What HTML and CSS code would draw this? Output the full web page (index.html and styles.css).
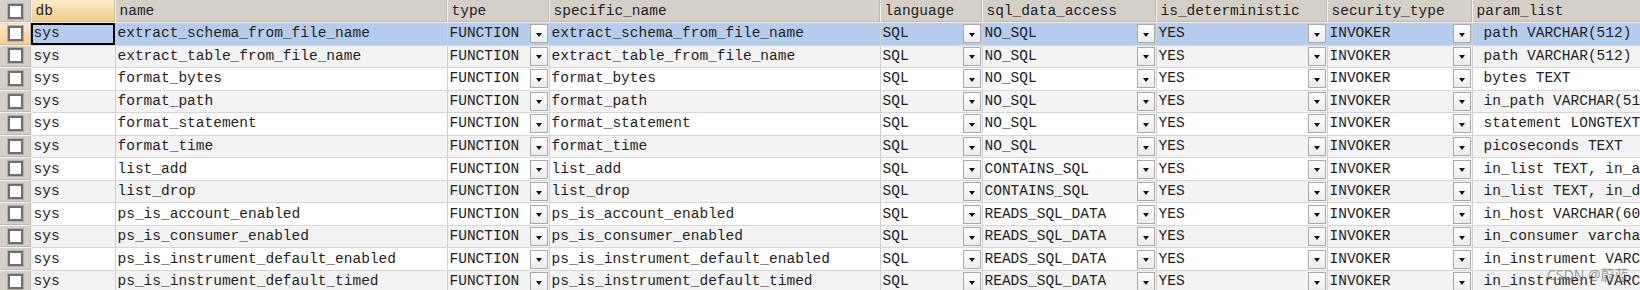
FILE: index.html
```html
<!DOCTYPE html>
<html lang="zh">
<head>
    <meta charset="UTF-8">
    <title>sys routines</title>
    <link rel="stylesheet" href="styles.css">
</head>
<body>
    <table class="grid">
        <colgroup>
            <col class="c-chk"><col class="c-db"><col class="c-name"><col class="c-type"><col class="c-spec">
            <col class="c-lang"><col class="c-access"><col class="c-det"><col class="c-sec"><col class="c-param">
        </colgroup>
        <thead>
            <tr>
                <th class="chk"><span class="box"></span></th>
                <th class="sorted">db</th>
                <th>name</th>
                <th>type</th>
                <th>specific_name</th>
                <th>language</th>
                <th>sql_data_access</th>
                <th>is_deterministic</th>
                <th>security_type</th>
                <th>param_list</th>
            </tr>
        </thead>
        <tbody>
            <tr class="selected">
                <td class="chk current"><span class="box"></span></td>
                <td class="focus">sys</td>
                <td>extract_schema_from_file_name</td>
                <td><div class="pick"><span>FUNCTION</span><i class="dd"></i></div></td>
                <td>extract_schema_from_file_name</td>
                <td><div class="pick"><span>SQL</span><i class="dd"></i></div></td>
                <td><div class="pick"><span>NO_SQL</span><i class="dd"></i></div></td>
                <td><div class="pick"><span>YES</span><i class="dd"></i></div></td>
                <td><div class="pick"><span>INVOKER</span><i class="dd"></i></div></td>
                <td class="param">path VARCHAR(512)</td>
            </tr>
            <tr>
                <td class="chk"><span class="box"></span></td>
                <td>sys</td>
                <td>extract_table_from_file_name</td>
                <td><div class="pick"><span>FUNCTION</span><i class="dd"></i></div></td>
                <td>extract_table_from_file_name</td>
                <td><div class="pick"><span>SQL</span><i class="dd"></i></div></td>
                <td><div class="pick"><span>NO_SQL</span><i class="dd"></i></div></td>
                <td><div class="pick"><span>YES</span><i class="dd"></i></div></td>
                <td><div class="pick"><span>INVOKER</span><i class="dd"></i></div></td>
                <td class="param">path VARCHAR(512)</td>
            </tr>
            <tr>
                <td class="chk"><span class="box"></span></td>
                <td>sys</td>
                <td>format_bytes</td>
                <td><div class="pick"><span>FUNCTION</span><i class="dd"></i></div></td>
                <td>format_bytes</td>
                <td><div class="pick"><span>SQL</span><i class="dd"></i></div></td>
                <td><div class="pick"><span>NO_SQL</span><i class="dd"></i></div></td>
                <td><div class="pick"><span>YES</span><i class="dd"></i></div></td>
                <td><div class="pick"><span>INVOKER</span><i class="dd"></i></div></td>
                <td class="param">bytes TEXT</td>
            </tr>
            <tr>
                <td class="chk"><span class="box"></span></td>
                <td>sys</td>
                <td>format_path</td>
                <td><div class="pick"><span>FUNCTION</span><i class="dd"></i></div></td>
                <td>format_path</td>
                <td><div class="pick"><span>SQL</span><i class="dd"></i></div></td>
                <td><div class="pick"><span>NO_SQL</span><i class="dd"></i></div></td>
                <td><div class="pick"><span>YES</span><i class="dd"></i></div></td>
                <td><div class="pick"><span>INVOKER</span><i class="dd"></i></div></td>
                <td class="param">in_path VARCHAR(512)</td>
            </tr>
            <tr>
                <td class="chk"><span class="box"></span></td>
                <td>sys</td>
                <td>format_statement</td>
                <td><div class="pick"><span>FUNCTION</span><i class="dd"></i></div></td>
                <td>format_statement</td>
                <td><div class="pick"><span>SQL</span><i class="dd"></i></div></td>
                <td><div class="pick"><span>NO_SQL</span><i class="dd"></i></div></td>
                <td><div class="pick"><span>YES</span><i class="dd"></i></div></td>
                <td><div class="pick"><span>INVOKER</span><i class="dd"></i></div></td>
                <td class="param">statement LONGTEXT</td>
            </tr>
            <tr>
                <td class="chk"><span class="box"></span></td>
                <td>sys</td>
                <td>format_time</td>
                <td><div class="pick"><span>FUNCTION</span><i class="dd"></i></div></td>
                <td>format_time</td>
                <td><div class="pick"><span>SQL</span><i class="dd"></i></div></td>
                <td><div class="pick"><span>NO_SQL</span><i class="dd"></i></div></td>
                <td><div class="pick"><span>YES</span><i class="dd"></i></div></td>
                <td><div class="pick"><span>INVOKER</span><i class="dd"></i></div></td>
                <td class="param">picoseconds TEXT</td>
            </tr>
            <tr>
                <td class="chk"><span class="box"></span></td>
                <td>sys</td>
                <td>list_add</td>
                <td><div class="pick"><span>FUNCTION</span><i class="dd"></i></div></td>
                <td>list_add</td>
                <td><div class="pick"><span>SQL</span><i class="dd"></i></div></td>
                <td><div class="pick"><span>CONTAINS_SQL</span><i class="dd"></i></div></td>
                <td><div class="pick"><span>YES</span><i class="dd"></i></div></td>
                <td><div class="pick"><span>INVOKER</span><i class="dd"></i></div></td>
                <td class="param">in_list TEXT, in_add_value TEXT</td>
            </tr>
            <tr>
                <td class="chk"><span class="box"></span></td>
                <td>sys</td>
                <td>list_drop</td>
                <td><div class="pick"><span>FUNCTION</span><i class="dd"></i></div></td>
                <td>list_drop</td>
                <td><div class="pick"><span>SQL</span><i class="dd"></i></div></td>
                <td><div class="pick"><span>CONTAINS_SQL</span><i class="dd"></i></div></td>
                <td><div class="pick"><span>YES</span><i class="dd"></i></div></td>
                <td><div class="pick"><span>INVOKER</span><i class="dd"></i></div></td>
                <td class="param">in_list TEXT, in_drop_value TEXT</td>
            </tr>
            <tr>
                <td class="chk"><span class="box"></span></td>
                <td>sys</td>
                <td>ps_is_account_enabled</td>
                <td><div class="pick"><span>FUNCTION</span><i class="dd"></i></div></td>
                <td>ps_is_account_enabled</td>
                <td><div class="pick"><span>SQL</span><i class="dd"></i></div></td>
                <td><div class="pick"><span>READS_SQL_DATA</span><i class="dd"></i></div></td>
                <td><div class="pick"><span>YES</span><i class="dd"></i></div></td>
                <td><div class="pick"><span>INVOKER</span><i class="dd"></i></div></td>
                <td class="param">in_host VARCHAR(60), in_user VARCHAR(32)</td>
            </tr>
            <tr>
                <td class="chk"><span class="box"></span></td>
                <td>sys</td>
                <td>ps_is_consumer_enabled</td>
                <td><div class="pick"><span>FUNCTION</span><i class="dd"></i></div></td>
                <td>ps_is_consumer_enabled</td>
                <td><div class="pick"><span>SQL</span><i class="dd"></i></div></td>
                <td><div class="pick"><span>READS_SQL_DATA</span><i class="dd"></i></div></td>
                <td><div class="pick"><span>YES</span><i class="dd"></i></div></td>
                <td><div class="pick"><span>INVOKER</span><i class="dd"></i></div></td>
                <td class="param">in_consumer varchar(64)</td>
            </tr>
            <tr>
                <td class="chk"><span class="box"></span></td>
                <td>sys</td>
                <td>ps_is_instrument_default_enabled</td>
                <td><div class="pick"><span>FUNCTION</span><i class="dd"></i></div></td>
                <td>ps_is_instrument_default_enabled</td>
                <td><div class="pick"><span>SQL</span><i class="dd"></i></div></td>
                <td><div class="pick"><span>READS_SQL_DATA</span><i class="dd"></i></div></td>
                <td><div class="pick"><span>YES</span><i class="dd"></i></div></td>
                <td><div class="pick"><span>INVOKER</span><i class="dd"></i></div></td>
                <td class="param">in_instrument VARCHAR(128)</td>
            </tr>
            <tr>
                <td class="chk"><span class="box"></span></td>
                <td>sys</td>
                <td>ps_is_instrument_default_timed</td>
                <td><div class="pick"><span>FUNCTION</span><i class="dd"></i></div></td>
                <td>ps_is_instrument_default_timed</td>
                <td><div class="pick"><span>SQL</span><i class="dd"></i></div></td>
                <td><div class="pick"><span>READS_SQL_DATA</span><i class="dd"></i></div></td>
                <td><div class="pick"><span>YES</span><i class="dd"></i></div></td>
                <td><div class="pick"><span>INVOKER</span><i class="dd"></i></div></td>
                <td class="param">in_instrument VARCHAR(128)</td>
            </tr>
        </tbody>
    </table>
    <div class="watermark">CSDN @蔚蓝</div>
</body>
</html>
```

FILE: styles.css
```css
html, body {
    margin: 0;
    padding: 0;
    overflow: hidden;
    background: #fff;
}
body {
    font-family: 'Liberation Mono', 'Courier New', monospace;
    font-size: 14.5px;
    color: #1e1e1e;
    width: 1640px;
    height: 290px;
    position: relative;
}
.grid {
    table-layout: fixed;
    border-collapse: collapse;
    width: 1800px;
}
.c-chk { width: 31px; }
.c-db { width: 84px; }
.c-name { width: 332px; }
.c-type { width: 102px; }
.c-spec { width: 331px; }
.c-lang { width: 102px; }
.c-access { width: 174px; }
.c-det { width: 171px; }
.c-sec { width: 145px; }
.c-param { width: 328px; }

.grid th {
    height: 22px;
    padding: 0 0 0 4px;
    text-align: left;
    font-weight: normal;
    background: #d4d0c8;
    border-right: 1px solid #f4f3ef;
    border-bottom: 1px solid #f4f3ef;
    box-shadow: inset -1px -1px 0 #bdb9b0;
    white-space: nowrap;
    overflow: hidden;
}
.grid th.sorted {
    background: linear-gradient(to bottom, #fdebc8, #f2cb88);
}
.grid td {
    height: 21.55px;
    padding: 0 0 0 2px;
    border-right: 1px solid #d0d0d0;
    border-bottom: 1px solid #d6d6d6;
    white-space: nowrap;
    overflow: hidden;
    line-height: 19px;
}
.grid tbody tr:nth-child(even) td {
    background: #f3f3f3;
}
.grid tbody tr.selected td {
    background: #b5cced;
}
.grid td.focus {
    outline: 2px solid #000;
    outline-offset: -2px;
}
.grid td.param {
    padding-left: 11px;
}

/* row header with the checkbox */
.grid .chk,
.grid tbody tr:nth-child(even) td.chk {
    padding: 0;
    text-align: center;
    background: #d4d0c8;
    border-right: 1px solid #f4f3ef;
    border-bottom: 1px solid #f4f3ef;
    box-shadow: inset -1px -1px 0 #bdb9b0;
}
.grid tbody tr.selected td.chk.current {
    background: linear-gradient(to bottom, #fdebc8, #f2cb88);
}
.box {
    display: inline-block;
    width: 11px;
    height: 11px;
    background: #fff;
    border: 2px solid #6e6e6e;
    box-shadow: 0 0 0 1px #b4b1aa;
    vertical-align: middle;
}

/* combo cells */
.pick {
    display: flex;
    align-items: center;
    justify-content: space-between;
    padding-right: 1px;
}
.dd {
    width: 18px;
    height: 19px;
    box-sizing: border-box;
    border: 1px solid #a9a9a9;
    background: linear-gradient(to bottom, #ffffff, #ececec);
    display: flex;
    align-items: center;
    justify-content: center;
}
.dd::after {
    content: '';
    border-left: 3px solid transparent;
    border-right: 3px solid transparent;
    border-top: 4px solid #111;
    margin-top: 2px;
}

.watermark {
    position: absolute;
    left: 1547px;
    top: 264px;
    font-family: 'Noto Sans', 'Noto Sans CJK SC', sans-serif;
    font-size: 14px;
    color: rgba(110, 110, 110, 0.7);
}
```
